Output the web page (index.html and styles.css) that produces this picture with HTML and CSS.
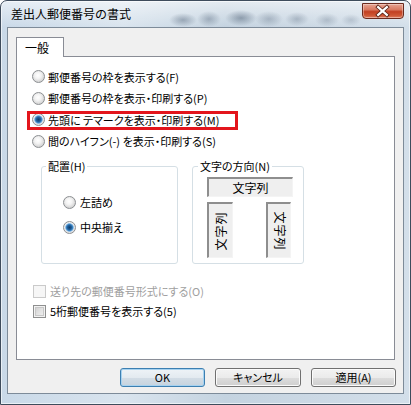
FILE: index.html
```html
<!DOCTYPE html>
<html lang="ja">
<head>
<meta charset="utf-8">
<link rel="stylesheet" href="styles.css">
</head>
<body>
<div class="window">
  <div class="titlebar">
    <div class="title">差出人郵便番号の書式</div>
    <div class="close">
      <svg width="42" height="16" viewBox="0 0 42 16">
        <path d="M16.5 4 L25.5 12 M25.5 4 L16.5 12" stroke="#5a2418" stroke-width="4" stroke-linecap="square"/>
        <path d="M16.5 4 L25.5 12 M25.5 4 L16.5 12" stroke="#ffffff" stroke-width="2.2" stroke-linecap="square"/>
      </svg>
    </div>
  </div>
  <div class="client">
    <div class="tabs"><div class="tab">一般</div></div>
    <div class="panel">
      <div class="row"><span class="radio"></span><span>郵便番号の枠を表示する(F)</span></div>
      <div class="row"><span class="radio"></span><span>郵便番号の枠を表示・印刷する(P)</span></div>
      <div class="row"><span class="radio checked"></span><span>先頭に テマークを表示・印刷する(M)</span><span class="mark"></span></div>
      <div class="row"><span class="radio"></span><span>間のハイフン(-) を表示・印刷する(S)</span></div>
      <div class="groups">
        <fieldset class="group g1">
          <legend>配置(H)</legend>
          <div class="g1-body">
            <div class="row-s"><span class="radio"></span><span>左詰め</span></div>
            <div class="row-s"><span class="radio checked"></span><span>中央揃え</span></div>
          </div>
        </fieldset>
        <fieldset class="group g2">
          <legend>文字の方向(N)</legend>
          <div class="g2-body">
            <div class="sunk horiz">文字列</div>
            <div class="verts">
              <div class="sunk vert v-left"><span class="rot-l">文字列</span></div>
              <div class="sunk vert v-right"><span class="rot-r">文字列</span></div>
            </div>
          </div>
        </fieldset>
      </div>
      <div class="checks">
        <div class="crow disabled"><span class="check"></span><span>送り先の郵便番号形式にする(O)</span></div>
        <div class="crow"><span class="check"></span><span>5桁郵便番号を表示する(5)</span></div>
      </div>
    </div>
    <div class="buttons">
      <div class="btn default">OK</div>
      <div class="btn wide">キャンセル</div>
      <div class="btn">適用(A)</div>
    </div>
  </div>
</div>
</body>
</html>
```
FILE: styles.css
```css
html, body {
  margin: 0;
  padding: 0;
  width: 411px;
  height: 405px;
  overflow: hidden;
  background: #ffffff;
}
body {
  font-family: "Noto Sans CJK JP", "Noto Sans", sans-serif;
  font-size: 11px;
  color: #000;
  font-feature-settings: "palt";
}
.window {
  box-sizing: border-box;
  width: 411px;
  height: 405px;
  border: 1px solid #3e4c5c;
  border-radius: 7px 7px 0 0;
  display: flex;
  flex-direction: column;
  background:
    linear-gradient(180deg, rgba(255,255,255,0.55) 0px, rgba(255,255,255,0) 26px),
    linear-gradient(90deg, #c9d9e8 0%, #d9e4ee 30%, #c4d3e0 55%, #cbd8e4 75%, #d3dfea 100%);
  box-shadow: inset 0 0 0 1px rgba(255,255,255,0.6);
}
.titlebar {
  height: 26px;
  display: flex;
  justify-content: space-between;
  align-items: flex-start;
  padding: 0 6px 0 10px;
  background:
    radial-gradient(ellipse 14px 7px at 182px 19px, rgba(40,60,85,0.35), rgba(40,60,85,0)),
    radial-gradient(ellipse 12px 8px at 208px 18px, rgba(40,60,85,0.30), rgba(40,60,85,0)),
    radial-gradient(ellipse 16px 8px at 240px 17px, rgba(40,60,85,0.40), rgba(40,60,85,0)),
    radial-gradient(ellipse 14px 8px at 268px 18px, rgba(40,60,85,0.25), rgba(40,60,85,0)),
    radial-gradient(ellipse 12px 7px at 296px 18px, rgba(40,60,85,0.25), rgba(40,60,85,0)),
    radial-gradient(ellipse 12px 7px at 326px 19px, rgba(40,60,85,0.22), rgba(40,60,85,0)),
    radial-gradient(ellipse 10px 6px at 350px 19px, rgba(40,60,85,0.18), rgba(40,60,85,0));
}
.title {
  font-size: 12px;
  line-height: 16px;
  margin-top: 5px;
  color: #000;
  font-feature-settings: normal;
}
.close {
  width: 42px;
  height: 16px;
  margin-top: 2px;
  box-sizing: border-box;
  border: 1px solid #6b2a1e;
  border-radius: 0 0 4px 4px;
  background: linear-gradient(180deg, #e7a593 0%, #d97a62 40%, #c23f22 55%, #cf5a38 85%, #e4866a 100%);
  box-shadow: inset 0 0 0 1px rgba(255,255,255,0.35);
  display: flex;
}
.close svg {
  margin: -1px 0 0 -1px;
}
.client {
  flex: 1;
  margin: 0 6px 10px 6px;
  background: #f0f0f0;
  border: 1px solid #7d8b99;
  padding: 9px 8px 0 8px;
  display: flex;
  flex-direction: column;
}
.tabs {
  display: flex;
  height: 19px;
}
.tab {
  box-sizing: border-box;
  width: 48px;
  height: 20px;
  background: #fff;
  border: 1px solid #898c95;
  border-bottom: none;
  padding-left: 8px;
  font-size: 12px;
  line-height: 19px;
  position: relative;
  z-index: 1;
}
.panel {
  box-sizing: border-box;
  height: 304px;
  background: #fff;
  border: 1px solid #898c95;
  padding: 9px 0 0 15px;
}
.row {
  position: relative;
  height: 21.5px;
  display: flex;
  align-items: center;
  gap: 3px;
  white-space: nowrap;
}
.mark {
  position: absolute;
  left: -5px;
  top: 2px;
  width: 211px;
  height: 19px;
  box-sizing: border-box;
  border: 3px solid #e3151c;
}
.radio {
  box-sizing: border-box;
  width: 13px;
  height: 13px;
  border-radius: 50%;
  border: 1px solid #8c8f92;
  background: radial-gradient(circle at 45% 40%, #ffffff 0%, #f3f3f3 35%, #d2d2d2 75%, #c6c6c6 100%);
  flex: none;
}
.radio.checked {
  background:
    radial-gradient(circle at 50% 50%, #0f3e6e 0px, #1f5c96 2px, #3f86c4 3.2px, #8cbde6 4px, rgba(255,255,255,0) 4.6px),
    radial-gradient(circle at 45% 40%, #ffffff 0%, #f0f0f0 45%, #cfcfcf 100%);
}
.groups {
  display: flex;
  gap: 14px;
  margin: 6px 0 0 9px;
}
.group {
  box-sizing: border-box;
  margin: 0;
  padding: 0;
  min-width: 0;
  height: 106px;
  border: 1px solid #d5dfe5;
  border-radius: 3px;
}
.group legend {
  padding: 0 2px;
  font-size: 11px;
  line-height: 16px;
}
.g1 { width: 137px; }
.g1 legend { margin-left: 4px; }
.g2 { width: 112px; }
.g2 legend { margin-left: 5px; }
.g1-body {
  padding: 19px 0 0 21px;
  display: flex;
  flex-direction: column;
  gap: 7px;
}
.row-s {
  height: 18px;
  display: flex;
  align-items: center;
  gap: 4px;
}
.g2-body {
  padding: 3px 0 0 14px;
}
.sunk {
  box-sizing: border-box;
  background: #efefef;
  border-top: 2px solid #8e8e8e;
  border-left: 2px solid #8e8e8e;
  border-right: 1px solid #f4f4f4;
  border-bottom: 1px solid #f4f4f4;
  font-size: 12px;
  font-feature-settings: normal;
  display: flex;
  align-items: center;
  justify-content: center;
}
.horiz {
  width: 86px;
  height: 20px;
  line-height: 16px;
}
.verts {
  display: flex;
  margin-top: 5px;
  gap: 33px;
}
.vert {
  width: 26px;
  height: 56px;
  white-space: nowrap;
  line-height: 14px;
}
.v-right { width: 25px; }
.rot-l { display: inline-block; transform: rotate(-90deg); letter-spacing: 1px; }
.rot-r { display: inline-block; transform: rotate(90deg); letter-spacing: 1px; }
.checks {
  margin-top: 17px;
  padding-left: 1px;
}
.crow {
  height: 20px;
  display: flex;
  align-items: center;
  gap: 4px;
  white-space: nowrap;
}
.check {
  box-sizing: border-box;
  width: 13px;
  height: 13px;
  border: 1px solid #8e8f8f;
  background: linear-gradient(135deg, #cbcbcb 0%, #e2e2e2 50%, #f4f4f4 100%);
  box-shadow: inset 0 0 0 1px #f2f2f2, inset 0 0 0 2px #c8c8c8;
  flex: none;
}
.crow.disabled { color: #a0a0a0; }
.crow.disabled .check {
  border-color: #cacaca;
  background: #f6f6f6;
  box-shadow: none;
}
.buttons {
  display: flex;
  justify-content: flex-end;
  gap: 10px;
  margin: 8px -1px 0 0;
}
.btn {
  box-sizing: border-box;
  width: 85px;
  height: 19px;
  border: 1px solid #707070;
  border-radius: 3px;
  background: linear-gradient(180deg, #f3f3f3 0%, #ebebeb 50%, #dddddd 50%, #cfcfcf 100%);
  box-shadow: inset 0 0 0 1px #fbfbfb;
  font-size: 11px;
  line-height: 17px;
  text-align: center;
}
.btn.wide { width: 86px; }
.btn.default {
  border-color: #3c7fb1;
  background: linear-gradient(180deg, #eef3f7 0%, #e3eaf0 50%, #d3dde6 50%, #c6d3de 100%);
  box-shadow: inset 0 0 0 1px #a6d2f0;
}
```
